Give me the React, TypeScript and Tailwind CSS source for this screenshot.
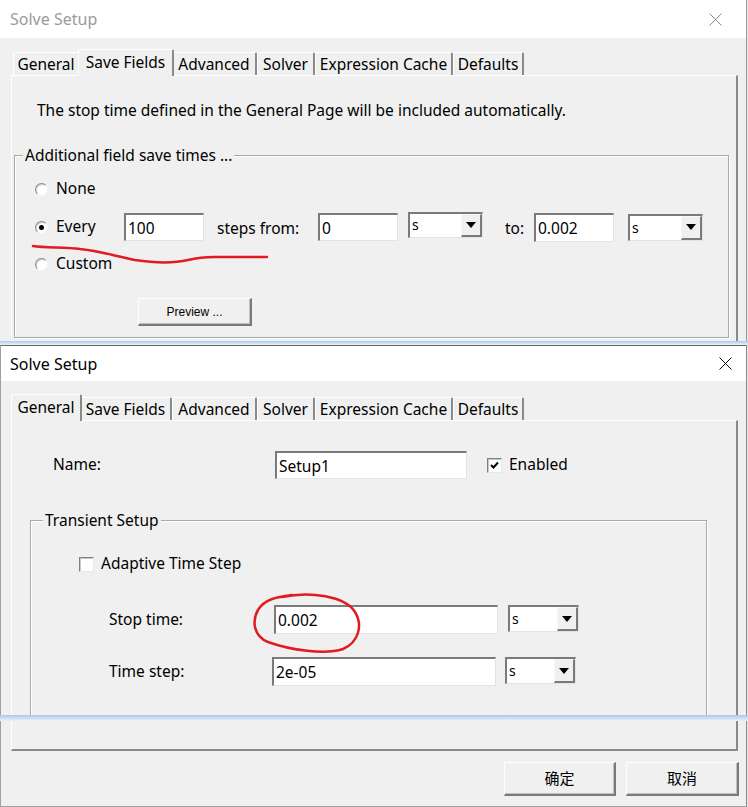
import React from "react";

type Tab = { label: string; w: string; wSel: string };

const TABS: Tab[] = [
  { label: "General", w: "w-[67px]", wSel: "w-[71px]" },
  { label: "Save Fields", w: "w-[92px]", wSel: "w-[96px]" },
  { label: "Advanced", w: "w-[85px]", wSel: "w-[89px]" },
  { label: "Solver", w: "w-[58px]", wSel: "w-[62px]" },
  { label: "Expression Cache", w: "w-[138px]", wSel: "w-[142px]" },
  { label: "Defaults", w: "w-[71px]", wSel: "w-[75px]" },
];

function Tabs({ selected }: { selected: number }) {
  return (
    <div className="flex items-end h-[27px] pl-[13px]">
      {TABS.map((t, i) =>
        i === selected ? (
          <div
            key={t.label}
            className={`${t.wSel} -mx-[2px] h-[27px] relative z-10 -mb-px bg-[#f0f0f0] border-t border-l border-white border-r-2 border-r-[#8a8a8a] rounded-t-[2px] flex items-start pt-[1px] justify-center leading-[22px]`}
          >
            {t.label}
          </div>
        ) : (
          <div
            key={t.label}
            className={`${t.w} h-[23px] bg-[#f0f0f0] border-t border-l border-white border-r-2 border-r-[#8a8a8a] rounded-t-[2px] flex items-center justify-center leading-[20px]`}
          >
            {t.label}
          </div>
        )
      )}
    </div>
  );
}

function Sunken({ w, h, value, extra = "" }: { w: string; h: string; value: string; extra?: string }) {
  return (
    <div
      className={`${w} ${h} ${extra} bg-white border-t-2 border-l-2 border-t-[#7a7a7a] border-l-[#7a7a7a] border-b border-r border-b-[#e3e3e3] border-r-[#e3e3e3] flex items-center pl-[2px] leading-[20px] text-[15.5px]`}
    >
      {value}
    </div>
  );
}

function Select({ w, h, extra = "" }: { w: string; h: string; extra?: string }) {
  return (
    <div
      className={`${w} ${h} ${extra} bg-white border-t-2 border-l-2 border-t-[#7a7a7a] border-l-[#7a7a7a] border-b border-r border-b-[#e3e3e3] border-r-[#e3e3e3] flex items-stretch`}
    >
      <div className="flex-1 flex items-center pl-[2px] text-[14px] leading-[18px]">s</div>
      <div className="w-[21px] bg-[#f0f0f0] border-t border-l border-t-[#f8f8f8] border-l-[#f8f8f8] border-b-2 border-r-2 border-b-[#7a7a7a] border-r-[#7a7a7a] flex items-center justify-center">
        <svg width="10" height="6" viewBox="0 0 10 6">
          <path d="M0 0 H10 L5 6 Z" fill="#000" />
        </svg>
      </div>
    </div>
  );
}

function Radio({ checked }: { checked?: boolean }) {
  return (
    <div className="w-[13px] h-[13px] rounded-full bg-white border border-t-[#8a8a8a] border-l-[#8a8a8a] border-b-[#f4f4f4] border-r-[#f4f4f4] shadow-[inset_1px_1px_0_#cfcfcf] flex items-center justify-center shrink-0">
      {checked && <div className="w-[5px] h-[5px] rounded-full bg-black" />}
    </div>
  );
}

function Check({ checked, extra = "" }: { checked?: boolean; extra?: string }) {
  return (
    <div className={`w-[15px] h-[15px] ${extra} bg-white border border-t-[#808080] border-l-[#808080] border-b-[#e8e8e8] border-r-[#e8e8e8] shadow-[inset_1px_1px_0_#c8c8c8] flex items-center justify-center shrink-0`}>
      {checked && (
        <svg width="9" height="8" viewBox="0 0 9 8">
          <path d="M1 4 L3.5 6.5 L8 1.5" stroke="#000" strokeWidth="2" fill="none" />
        </svg>
      )}
    </div>
  );
}

function RaisedButton({ w, h, children, extra = "" }: { w: string; h: string; children: React.ReactNode; extra?: string }) {
  return (
    <div
      className={`${w} ${h} ${extra} bg-[#f0f0f0] border-t border-l border-t-white border-l-white border-b-2 border-r-2 border-b-[#7a7a7a] border-r-[#7a7a7a] shadow-[inset_-1px_-1px_0_#c0c0c0] flex items-center justify-center`}
    >
      {children}
    </div>
  );
}

function CloseX({ color }: { color: string }) {
  return (
    <svg width="13" height="13" viewBox="0 0 13 13">
      <path d="M0.5 0.5 L12.5 12.5 M12.5 0.5 L0.5 12.5" stroke={color} strokeWidth="1" />
    </svg>
  );
}

export default function App() {
  return (
    <div className="w-[748px] h-[807px] bg-[#e8e8e8] overflow-hidden text-black text-[15.5px] font-['Noto_Sans','Noto_Sans_CJK_SC',sans-serif] relative">
      {/* Top dialog */}
      <div className="h-[345px] w-[747px] flex flex-col border-r border-r-[#9a9a9a] overflow-hidden relative">
        <div className="h-[38px] bg-white flex items-center justify-between pl-[10px] pr-[24px] shrink-0">
          <span className="text-[16px] text-[#9a9a9a]">Solve Setup</span>
          <CloseX color="#8a8a8a" />
        </div>
        <div className="flex-1 bg-[#f0f0f0] pt-[10px] flex flex-col">
          <Tabs selected={1} />
          <div className="ml-[11px] w-[727px] flex-1 border-t border-l border-white border-r-2 border-r-[#8a8a8a] flex flex-col">
            <div className="pl-[25px] pt-[24px] leading-[20px]">
              The stop time defined in the General Page will be included automatically.
            </div>
            <div className="mt-[35px] ml-[2px] w-[715px] h-[183px] border border-[#a8a8a8] shadow-[inset_1px_1px_0_#fff,1px_1px_0_#fff] flex flex-col">
              <div className="w-fit -mt-[11px] ml-[8px] px-[2px] bg-[#f0f0f0] leading-[20px]">
                Additional field save times ...
              </div>
              <div className="mt-[14px] h-[20px] pl-[20px] flex items-center">
                <Radio />
                <span className="ml-[8px]">None</span>
              </div>
              <div className="mt-[12px] h-[32px] pl-[20px] flex items-center">
                <Radio checked />
                <span className="ml-[8px] w-[68px]">Every</span>
                <Sunken w="w-[80px]" h="h-[28px]" value="100" />
                <span className="ml-[13px] w-[101px] pt-[4px]">steps from:</span>
                <Sunken w="w-[80px]" h="h-[28px]" value="0" />
                <Select w="w-[75px]" h="h-[26px]" extra="ml-[10px] -mt-[5px]" />
                <span className="ml-[22px] w-[29px] pt-[4px]">to:</span>
                <Sunken w="w-[80px]" h="h-[29px]" value="0.002" />
                <Select w="w-[75px]" h="h-[27px]" extra="ml-[14px]" />
              </div>
              <div className="mt-[11px] h-[20px] pl-[20px] flex items-center">
                <Radio />
                <span className="ml-[8px]">Custom</span>
              </div>
              <RaisedButton w="w-[114px]" h="h-[28px]" extra="mt-[24px] ml-[123px]">
                <span className="text-[12px] font-['Liberation_Sans',sans-serif]">Preview ...</span>
              </RaisedButton>
            </div>
          </div>
        </div>
      </div>

      {/* Bottom dialog */}
      <div className="h-[462px] w-[747px] flex flex-col border-t border-t-[#6a6a6a] border-l border-l-[#a0a0a0] border-r border-r-[#8a8a8a] border-b border-b-[#a0a0a0] overflow-hidden relative">
        <div className="h-[35px] bg-white flex items-center justify-between pl-[9px] pr-[14px] shrink-0">
          <span className="text-[16px]">Solve Setup</span>
          <CloseX color="#000" />
        </div>
        <div className="flex-1 bg-[#f0f0f0] pt-[12px] flex flex-col">
          <div className="-ml-px">
            <Tabs selected={0} />
          </div>
          <div className="ml-[10px] w-[727px] h-[331px] border-t border-l border-white border-r-2 border-r-[#8a8a8a] border-b-2 border-b-[#8a8a8a] flex flex-col">
            <div className="mt-[30px] pl-[41px] h-[28px] flex items-center">
              <span className="w-[222px]">Name:</span>
              <Sunken w="w-[192px]" h="h-[28px]" value="Setup1" />
              <Check checked extra="ml-[20px]" />
              <span className="ml-[7px]">Enabled</span>
            </div>
            <div className="mt-[41px] ml-[18px] w-[677px] h-[200px] border border-b-0 border-[#a8a8a8] shadow-[inset_1px_1px_0_#fff,1px_1px_0_#fff] flex flex-col">
              <div className="w-fit -mt-[11px] ml-[12px] px-[2px] bg-[#f0f0f0] leading-[20px]">
                Transient Setup
              </div>
              <div className="mt-[24px] pl-[48px] h-[20px] flex items-center">
                <Check />
                <span className="ml-[7px]">Adaptive Time Step</span>
              </div>
              <div className="mt-[31px] pl-[78px] h-[29px] flex items-center">
                <span className="w-[165px]">Stop time:</span>
                <Sunken w="w-[224px]" h="h-[29px]" value="0.002" />
                <Select w="w-[71px]" h="h-[27px]" extra="ml-[10px] -mt-[2px]" />
              </div>
              <div className="mt-[23px] pl-[78px] h-[29px] flex items-center">
                <span className="w-[163px]">Time step:</span>
                <Sunken w="w-[224px]" h="h-[29px]" value="2e-05" />
                <Select w="w-[71px]" h="h-[27px]" extra="ml-[9px] -mt-[2px]" />
              </div>
            </div>
          </div>
          <div className="mt-[11px] flex pl-[503px] gap-[10px]">
            <RaisedButton w="w-[112px]" h="h-[34px]">
              <span className="text-[15px]">确定</span>
            </RaisedButton>
            <RaisedButton w="w-[113px]" h="h-[34px]">
              <span className="text-[15px]">取消</span>
            </RaisedButton>
          </div>
        </div>
      </div>

      {/* stitching seams */}
      <div className="absolute left-0 top-[341px] w-[748px] h-[4px] bg-gradient-to-b from-[#a9cbf2] to-[#eef0f3]" />
      <div className="absolute left-0 top-[715px] w-[748px] h-[6px] bg-gradient-to-b from-[#a6c9f3] to-[#f0f0f0]" />

      {/* red annotations */}
      <svg className="absolute left-0 top-0 pointer-events-none" width="748" height="807" viewBox="0 0 748 807">
        <path
          d="M33 246 C45 248 65 247 80 249 C100 251 115 256 135 260 C155 263 175 263 188 260 C196 258 202 257 215 257 L267 257"
          stroke="#e01b22"
          strokeWidth="2.5"
          fill="none"
          strokeLinecap="round"
        />
        <path
          d="M282 597 C310 591 345 596 355 612 C363 625 359 642 343 649 C325 655 290 650 268 642 C253 636 252 620 258 610 C264 600 275 597 292 595"
          stroke="#e01b22"
          strokeWidth="2.5"
          fill="none"
          strokeLinecap="round"
        />
      </svg>
    </div>
  );
}
